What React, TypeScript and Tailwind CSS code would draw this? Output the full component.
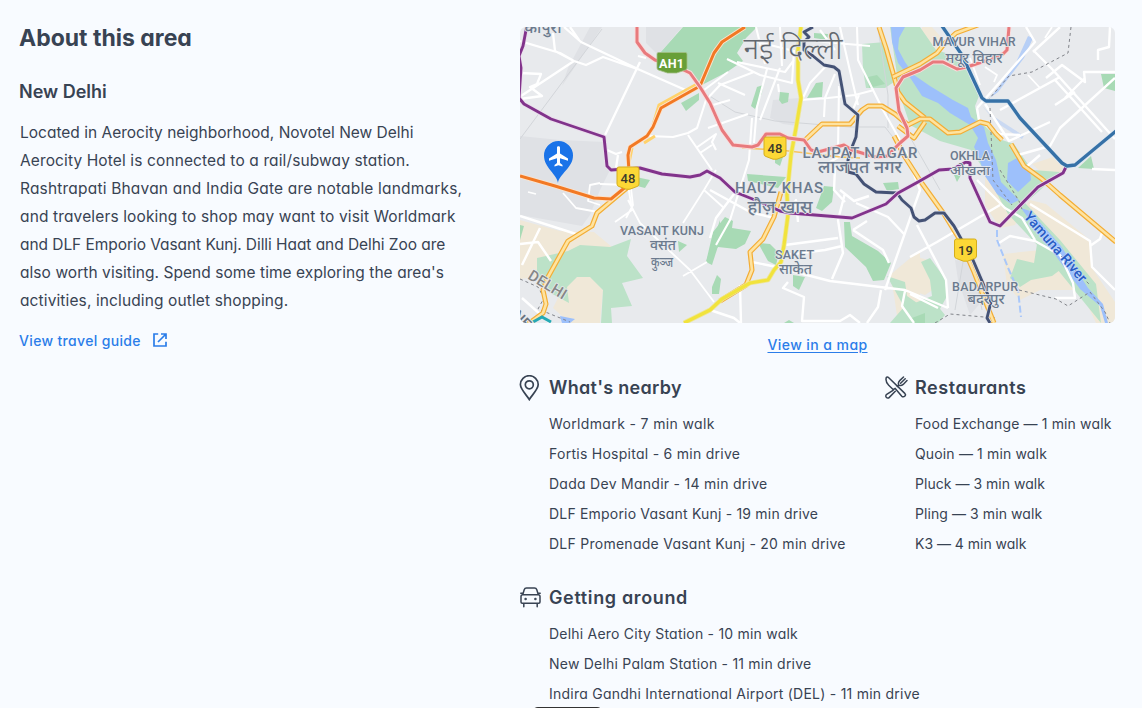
import type { ReactNode } from "react";

const nearby = [
  { t: "Worldmark - 7 min walk", c: "tracking-[0.36px]" },
  { t: "Fortis Hospital - 6 min drive", c: "tracking-[0.27px]" },
  { t: "Dada Dev Mandir - 14 min drive", c: "tracking-[0.27px]" },
  { t: "DLF Emporio Vasant Kunj - 19 min drive", c: "tracking-[0.19px]" },
  { t: "DLF Promenade Vasant Kunj - 20 min drive", c: "tracking-[0.26px]" },
];
const restaurants = [
  { t: "Food Exchange — 1 min walk", c: "tracking-[0.14px]" },
  { t: "Quoin — 1 min walk", c: "tracking-[0.15px]" },
  { t: "Pluck — 3 min walk", c: "tracking-[0.03px]" },
  { t: "Pling — 3 min walk", c: "tracking-[0.08px]" },
  { t: "K3 — 4 min walk", c: "tracking-[-0.02px]" },
];
const around = [
  { t: "Delhi Aero City Station - 10 min walk", c: "tracking-[0.22px]" },
  { t: "New Delhi Palam Station - 11 min drive", c: "tracking-[0.22px]" },
  { t: "Indira Gandhi International Airport (DEL) - 11 min drive", c: "tracking-[0.24px]" },
];
const about = [
  { t: "Located in Aerocity neighborhood, Novotel New Delhi", c: "tracking-[0px]" },
  { t: "Aerocity Hotel is connected to a rail/subway station.", c: "tracking-[0.12px]" },
  { t: "Rashtrapati Bhavan and India Gate are notable landmarks,", c: "tracking-[0.19px]" },
  { t: "and travelers looking to shop may want to visit Worldmark", c: "tracking-[0.14px]" },
  { t: "and DLF Emporio Vasant Kunj. Dilli Haat and Delhi Zoo are", c: "tracking-[-0.06px]" },
  { t: "also worth visiting. Spend some time exploring the area's", c: "tracking-[0.06px]" },
  { t: "activities, including outlet shopping.", c: "tracking-[0.12px]" },
];

function Section({ icon, title, items, tracking }: { icon: ReactNode; title: string; items: { t: string; c: string }[]; tracking: string }) {
  return (
    <section>
      <div className="flex h-7 items-center gap-2">
        <span className="flex w-[21px] shrink-0 justify-center">{icon}</span>
        <h3 className={`whitespace-nowrap text-[18px] font-semibold ${tracking}`}>{title}</h3>
      </div>
      <ul className="mt-2 pl-[29px] text-[14px] leading-[30px]">
        {items.map((i) => (
          <li key={i.t} className="whitespace-nowrap">
            <span className={i.c}>{i.t}</span>
          </li>
        ))}
      </ul>
    </section>
  );
}

function PinIcon() {
  return (
    <svg className="mr-[3px] mt-px h-[26px] w-[21px] shrink-0" viewBox="0 0 21 26" fill="none" stroke="currentColor" strokeWidth="1.7">
      <path d="M10.3 24.5C8 20.500 1.400 14.500 1.400 9.600a8.900 8.900 0 0 1 17.800 0c0 4.900-6.600 10.900-8.900 14.900Z" />
      <circle cx="10.300" cy="9.800" r="4" />
    </svg>
  );
}

function CutleryIcon() {
  return (
    <svg className="h-[23px] w-[23px] shrink-0" viewBox="0 0 23 23" fill="none" stroke="currentColor" strokeWidth="1.500" strokeLinecap="round" strokeLinejoin="round">
      <path d="M1.300 1.500c-.8 2.700.1 5.500 2.400 7.700l4.700 4.500 1.800-1.300 6.600 7.800a2 2 0 0 0 3-2.800L3.500 1.500c-.7-.7-1.700-.8-2.200 0Z" />
      <path d="m8 14.300-6.300 4.100a2 2 0 1 0 2.600 3l6-6.100M12.400 10.400l1.300-1.300c-.7-1.800-.2-3.300 1-4.500L18.500 1M22 4.500l-3.800 3.900c-1.200 1.100-2.700 1.500-4.300.9M20.200 2.700l-4.600 4.600" />
    </svg>
  );
}

function CarIcon() {
  return (
    <svg className="h-[21px] w-[21px] shrink-0" viewBox="0 0 21 21" fill="none" stroke="currentColor" strokeWidth="1.500" strokeLinecap="round" strokeLinejoin="round">
      <path d="m2.700 7.700 1.500-5C4.600 1.500 5.300 1 6.500 1h8c1.200 0 1.900.5 2.300 1.700l1.500 5M2.700 7.700h15.600c1 0 1.700.8 1.700 1.800V15c0 .8-.4 1.200-1.200 1.200H2.200C1.400 16.200 1 15.800 1 15V9.500c0-1 .7-1.800 1.700-1.800ZM3.800 16.200v3.600M17.200 16.200v3.600M.8 6.300h1.500M18.700 6.300h1.500" />
      <circle cx="5.600" cy="12" r=".5" fill="currentColor" />
      <circle cx="15.400" cy="12" r=".5" fill="currentColor" />
    </svg>
  );
}

function OpenIcon() {
  return (
    <svg className="h-[14px] w-[14px] shrink-0" viewBox="0 0 14 14" fill="none" stroke="currentColor" strokeWidth="1.700">
      <path d="M5.200 1H1v12h12V8.800M8 1h5v5M13 1 5 9" />
    </svg>
  );
}

function Road({ d, color, w, casing, cw }: { d: string; color: string; w: number; casing: string; cw: number }) {
  return (
    <g fill="none" strokeLinejoin="round">
      <path d={d} stroke={casing} strokeWidth={cw} />
      <path d={d} stroke={color} strokeWidth={w} />
    </g>
  );
}

function Shield({ x, y, n }: { x: number; y: number; n: string }) {
  return (
    <g>
      <path d={`M${x - 9} ${y - 11}h18q2 0 2 2v15q0 2-2 2.500l-7 2.700h-4l-7-2.700q-2-.5-2-2.500v-15q0-2 2-2Z`} fill="#fcd836" stroke="#d5ae1c" strokeWidth="1" />
      <text x={x} y={y + 4.800} textAnchor="middle" fontSize="13" fontWeight="500" fill="#3c3a2c">{n}</text>
    </g>
  );
}

function AreaMap() {
  const amber = [
    "M879 27 886 48 895 80 898 92 905 102 925 118",
    "M893 77 920 64 937 53 945 43 956 33 978 25",
    "M805 140 822 124 850 124 862 110 868 106 882 106 895 114 908 125 920 119 930 119 948 133 960 132 980 122 988 124 996 134 1002 140",
    "M1011 144 1024 166 1042 179 1060 195 1116 242",
    "M898 126 914 138 925 122",
    "M894 136 905 157 921 182 944 214 960 240 974 272 988 308 994 323",
    "M628 187 622 192 597 213 592 226 568 241 548 277 543 290 546 304 543 313 528 324",
    "M781 192 774 217 763 239 750 252 752 270 746 285 720 301",
  ];
  return (
    <svg className="block h-[296px] w-[595px] rounded-md" viewBox="520 27 595 296" fontFamily="Roboto, 'Noto Sans', sans-serif">
      <rect x="520" y="27" width="595" height="296" fill="#e8eaed" />
      <g fill="#dfe1e5">
        <path d="M520 136 560 140 605 142 610 170 600 190 590 215 582 226 520 215Z" />
        <path d="M646 27h36l-24 28-12-12Z" />
        <path d="M773 100 800 98 797 126 783 124 770 118Z" />
        <path d="M955 260 972 262 983 300 970 315 958 280Z" />
        <path d="M562 86 602 27 590 27 568 68Z" />
      </g>
      <g fill="#f0e8d8">
        <path d="M520 220 560 231 594 232 612 247 600 256 540 260 536 277 520 279Z" />
        <path d="M563 288 578 276 592 277 603 290 600 323 570 323 553 308Z" />
        <path d="M1030 200 1046 204 1090 240 1092 268 1115 302 1115 323 1096 323 1085 300 1060 250 1020 212Z" />
        <path d="M985 175 1008 205 1022 210 1015 225 1000 228 985 205Z" />
        <path d="M1003 254 1040 250 1062 258 1075 290 1040 290 1020 300 1007 285Z" />
        <path d="M910 255 928 260 940 285 925 295 910 290Z" />
        <path d="M890 275 920 250 920 310 898 323 894 295Z" />
        <path d="M922 27 932 27 948 45 935 52 922 42Z" />
        <path d="M1032 164 1056 156 1066 170 1048 178Z" />
      </g>
      <g fill="#bce2c8">
        <path d="M890 27H920L936 50 962 58 979 96 975 106 978 120 999 139 1014 144 1032 170 1060 172 1038 192 1025 203 1060 240 1096 284 1101 323 1092 312 1040 248 1008 214 984 170 971 150 940 141 910 125 900 95Z" />
        <path d="M862 44 885 42 894 82 885 88 866 88 863 70Z" />
        <path d="M568 251 580 245 610 247 631 239 627 256 643 278 622 283 632 306 611 308 612 323H601L603 290 590 277 577 277 567 287 569 303 545 290 537 277 537 258Z" />
        <path d="M1017 259 1034 263 1037 244 1053 247 1068 264 1052 276 1031 280 1020 287 1010 278Z" />
        <path d="M887 276 905 282 907 296 920 305 933 300 945 315 938 323H890L904 307Z" />
        <path d="M921 262 930 258 946 280 946 298 936 316 912 320 910 305 932 296 930 280Z" />
      </g>
      <g fill="#a8dab5">
        <path d="M660 53 683 27H757L746 38 737 53 743 61 727 72 700 86 688 72Z" />
        <path d="M520 225 524 226 520 240Z" />
        <path d="M681 103 699 93 699 100 686 111Z" />
        <path d="M751 106 757 87 763 85 762 93 755 109Z" />
        <path d="M780 92 789 93 788 102 782 104 779 100Z" />
        <path d="M807 98 816 83 823 82 822 97Z" />
        <path d="M868 77 877 75 885 84 869 88Z" />
        <path d="M814 33 828 34 827 40 814 38Z" />
        <path d="M775 157H783L780 166 775 163Z" />
        <path d="M747 174 786 177 778 188 748 181Z" />
        <path d="M816 208 824 186 834 187 832 202 822 211Z" />
        <path d="M883 183 898 182 899 189 887 191Z" />
        <path d="M713 232 725 217 733 221 732 228 751 231 745 244 736 249 718 247 706 262Z" />
        <path d="M758 243 770 244 779 253 776 265 768 261Z" />
        <path d="M712 287 717 275 721 279 719 294 712 294Z" />
        <path d="M706 262 720 220 720 240 712 265Z" />
        <path d="M844 222 850 222 852 236 878 251 891 263 884 280 873 281 866 267 845 247Z" />
        <path d="M793 275 805 277 799 290 793 286Z" />
        <path d="M784 323 789 320 794 323Z" />
        <path d="M1101 74H1115V91L1104 88Z" />
        <path d="M1078 168 1091 156 1094 169Z" />
        <path d="M678 241 687 245 679 252Z" />
        <path d="M636 177 650 180 645 188 637 186Z" />
        <path d="M954 175H961L957 182Z" />
        <path d="M912 318 925 313 925 323H912Z" />
      </g>
      <g fill="#9dc0fb">
        <path d="M891 27H905L899 38 898 49 905 62 914 75 930 86 953 100 968 108 971 117 984 127 988 143 996 160 1001 182 1019 200 1011 204 997 194 985 176 978 155 974 147 978 138 970 125 950 113 938 103 922 96 911 79 898 63 892 42Z" />
        <path d="M1008 163 1017 158 1030 168 1031 180 1018 192 1007 181Z" />
        <path d="M1021 208 1030 211 1061 246 1088 288 1103 304 1108 323H1105L1100 306 1080 289 1050 248Z" />
        <path d="M1028 36 1033 38 1024 58 998 92 990 98 1014 67Z" opacity=".65" />
        <path d="M982 106 990 114 1024 136 1022 139 997 123Z" opacity=".4" />
        <path d="M560 316 575 319 570 323H562Z" />
      </g>
      <g fill="none" stroke="#d2d5d9" strokeWidth="1">
        <path d="M520 139 602 29M708 95 735 112 775 121 850 127 885 127 899 145M878 27 888 95 888 128M910 137 940 190M965 250 955 310M973 263 982 310" />
      </g>
      <g fill="none" stroke="#fff" strokeWidth="1.800" strokeLinejoin="round">
        <path strokeWidth="2.300" d="M520 41 560 53 574 61 586 65 603 57 640 70 690 92M564 27 581 42 640 70M570 27 579 40M553 33 555 51 574 61 521 96M520 73 541 74 537 84 530 87 542 96 520 99M640 62 605 135M638 56 646 58M607 150 616 154 622 152M618 155 616 168" />
        <path strokeWidth="2.100" d="M728 72 704 90M648 136 673 137 688 133 697 128 706 100 720 85 754 72M688 135 712 170M696 148 716 134 712 142 716 150M700 153 712 145M713 105 730 100M708 128 748 114M752 118 749 160 730 220 716 245M767 69 757 107 754 143M780 68 760 120M727 59 760 75 792 83 794 50M737 62 785 72 794 60M718 83 745 95M778 84 779 92M800 100 828 98 855 95 874 90M828 64 810 83 802 100M835 74 825 98 824 117M839 86 838 150M780 27 782 66M750 40 790 50M756 27 765 64M840 27 850 71 858 105M857 27 858 60 883 110 900 140M802 40 870 46M820 30 835 50M859 95 852 112" />
        <path d="M536 194 528 192M563 193 576 208 598 212M600 183 590 185 588 201 600 205M600 184 628 185 632 210 615 222M628 200 640 223 690 270 714 302M683 223 704 190 724 208M704 190 716 170M683 276 707 262M626 218 633 205 630 180" />
        <path strokeWidth="2.400" d="M520 216 576 234M540 228 522 265M520 244 538 242 551 261M522 298 550 323M710 190 750 212 774 218M710 238 716 218 737 190M752 262 772 266 830 281 905 290 948 308M787 215 796 200 798 222M785 255 825 250 842 246M785 245 838 238M820 168 850 150M845 193 838 220 843 253 832 279M840 190 854 201 869 196M856 203 888 217 904 234M853 230 867 221M853 230 883 250 889 263M835 168 834 190 845 202M885 290 920 190 905 150M788 282 783 288 804 297 802 321 840 321 850 315 860 323M881 290 878 307 867 323M905 291 902 306 914 323M740 285 741 323M710 310 734 318 740 323M910 257 937 242 1000 205M910 294 938 308M917 225 946 280 948 308M977 180 1005 208 1022 218 1035 240M999 243 1010 236 1035 241 1060 255 1073 283 1075 298 1055 298M1018 155 1050 146 1060 128 1115 78" />
        <path strokeWidth="2.400" d="M977 108 1000 82 1035 42 1026 27M977 108 979 120 1000 134 1020 135M985 104 1009 141 1050 122M1033 50 1052 69 1115 139M1033 52 1060 27M1046 78 1062 65 1085 82 1084 72 1115 72M1065 98 1085 78M1000 110 1060 77M1055 80 1102 132M1075 92 1055 105M1110 27 1109 47 1098 50 1098 60M1025 168 1040 155M1092 169 1115 170M1030 204 1090 241 1092 267 1115 290M1090 246 1100 239 1103 230" />
        <path d="M1028 75 1040 88M970 58 980 85M985 67 997 75 994 82M1052 27 1045 38" />
      </g>
      <g fill="none" stroke="#808389" strokeWidth="1" strokeDasharray="3 3">
        <path d="M1071 27 1068 53 1032 72 1009 76 989 99M990 108 993 180 1012 205M1000 170 1019 201 1023 212M520 279 538 287 544 298 538 309 570 322M1019 290 1056 299 1068 306 1090 292 1105 312 1110 323M935 323 950 314 995 318M1040 235 1090 285" />
      </g>
      <path d="M997 230 997 240 1009 270 1018 290 1021 317" fill="none" stroke="#a8c7fa" strokeWidth="2" strokeDasharray="7 3" />
      <path d="M742 148 780 150 840 157 860 158" fill="none" stroke="#f7c35f" strokeWidth="1.500" />
      <path d="M697 84 659 105 653 125M655 136 644 143M632 148 628 168" fill="none" stroke="#ffd26a" strokeWidth="3" />
      {amber.map((d) => (
        <Road key={d} d={d} color="#fee3a0" w={2.600} casing="#f3ad35" cw={5} />
      ))}
      <Road d="M801 27 798 50 798 80 801 98 796 128 791 155 787 195 788 215 784 245 781 262 774 270 768 280 750 283 722 299 710 310 684 323" color="#f1e33c" w={3.200} casing="#eee69a" cw={4.800} />
      <Road d="M745 27 722 42 714 53 700 86 661 108 653 127 647 136 630 147 628 155 629 172M520 176 555 186 594 198 611 199 628 185" color="#f27924" w={3} casing="#fbe3cd" cw={4.800} />
      <Road d="M813 27 804 32 809 37 804 42 804 50 813 56 824 65 834 67 839 71 845 104 858 115 856 137 852 147 848 160 848 172 856 174 864 184 876 192 897 193 902 200 911 208 914 217 919 221 925 220 935 213 944 213 954 226 973 260 991 302 987 318 990 323" color="#445275" w={2.900} casing="#e0e3ea" cw={4.500} />
      <Road d="M637 27V42L645 53 655 60 675 66 690 73 700 87 710 103 722 130 733 145 752 147 758 145 766 134 780 134 788 138 804 140 811 150 818 152 844 145 852 150 875 157 887 156 900 143 908 136 907 128 899 111 896 88 903 77 920 70 933 62 943 62 957 69 967 67 985 61 1003 54 1007 50 1009 27" color="#e87a7d" w={3} casing="#f9dcdc" cw={4.800} />
      <Road d="M527 25 523 46 519 56 521 68 519 98 524 104 551 119 604 137 607 166 611 170 640 168 662 174 690 177 700 175 707 171 720 178 735 192 760 202 780 211 790 213 852 218 886 204 898 193 918 182 939 170 953 169 966 162 970 163 970 178 990 222 1000 226 1038 187 1063 173 1066 167" color="#81338b" w={2.900} casing="#eadcec" cw={4.500} />
      <Road d="M942 26 962 55 982 98 986 101H1008L1020 118 1062 163 1067 166 1075 165 1116 131" color="#3671a7" w={3.300} casing="#dce7f0" cw={4.800} />
      <path d="m533 322 9-5 9 5" fill="none" stroke="#25a9b5" strokeWidth="3" />
      <g fill="#6b7a8e" stroke="#e8eaed" strokeWidth="1.600" paintOrder="stroke" strokeLinejoin="round" textAnchor="middle" fontWeight="500">
        <text x="543" y="33" fontSize="16">कापुरा</text>
        <text x="793" y="59" fontSize="30" fontWeight="300" fontFamily="'Noto Sans', sans-serif" fill="#62686f" textLength="99" lengthAdjust="spacingAndGlyphs">नई दिल्ली</text>
        <g fontSize="12.500">
          <text x="974" y="46" textLength="83">MAYUR VIHAR</text>
          <text x="974" y="63" fontSize="14" textLength="57" lengthAdjust="spacingAndGlyphs">मयूर विहार</text>
          <text x="970" y="160" textLength="40">OKHLA</text>
          <text x="970" y="175" fontSize="13" textLength="40" lengthAdjust="spacingAndGlyphs">ओखला</text>
          <text x="662" y="235" textLength="84">VASANT KUNJ</text>
          <text x="663" y="250" fontSize="14" textLength="26" lengthAdjust="spacingAndGlyphs">वसंत</text>
          <text x="662" y="267" fontSize="14" textLength="22" lengthAdjust="spacingAndGlyphs">कुञ्ज</text>
          <text x="794.500" y="259" textLength="39">SAKET</text>
          <text x="795.500" y="274" fontSize="14" textLength="33" lengthAdjust="spacingAndGlyphs">साकेत</text>
          <text x="985" y="291" textLength="66">BADARPUR</text>
          <text x="986" y="304" fontSize="14" textLength="37" lengthAdjust="spacingAndGlyphs">बदरपुर</text>
        </g>
        <text x="860" y="157.500" fontSize="15" textLength="115">LAJPAT NAGAR</text>
        <text x="860" y="173" fontSize="17" textLength="84" lengthAdjust="spacingAndGlyphs">लाजपत नगर</text>
        <text x="779" y="193" fontSize="15" textLength="88">HAUZ KHAS</text>
        <text x="780" y="213" fontSize="18" textLength="65" lengthAdjust="spacingAndGlyphs">हौज़ खास</text>
        <text transform="translate(545 289) rotate(31)" fontSize="15" fill="#868686" textLength="42">DELHI</text>
        <text transform="translate(523 328) rotate(45)" fontSize="15" fill="#68727e">NEW</text>
        <text transform="translate(1052 250) rotate(49)" fontSize="14" fill="#285cc4" stroke="#bbd4fb" textLength="88">Yamuna River</text>
      </g>
      <path d="M657 54q0-1.500 1.500-1.500h27q1.500 0 1.500 1.500v14q0 1.500-1.500 2l-9 3h-9l-9-3q-1.500-.5-1.500-2Z" fill="#689f38" stroke="#a2be85" strokeWidth=".8" />
      <text x="671.500" y="68" textAnchor="middle" fontSize="12.500" fontWeight="700" fill="#fff" textLength="25">AH1</text>
      <Shield x={628} y={178} n="48" />
      <Shield x={775} y={148} n="48" />
      <Shield x={965.500} y={250} n="19" />
      <path d="M558 183c-1-9-14-15-14-27.500a14.500 14.500 0 0 1 29 0c0 12.500-14 18.500-15 27.500Z" fill="#1a73e8" />
      <path d="M557 147.500c0-1.800 3-1.800 3 0v6l8 5v2.300l-8-2.600v4.800l2.500 2v1.500l-4-1.200-4 1.200V165l2.500-2v-4.800l-8 2.600v-2.300l8-5Z" fill="#fff" />
    </svg>
  );
}

export default function App() {
  return (
    <div className="flex h-[708px] w-[1142px] overflow-hidden bg-[#f8fbff] pl-[19px] font-['Inter','Open_Sans',sans-serif] text-[#384353] [font-feature-settings:'cv11']">
      <section className="w-[501px] shrink-0 pt-[22px]">
        <h1 className="text-[23px] font-bold leading-8">About this area</h1>
        <h2 className="mt-6 text-[18px] font-semibold leading-7">New Delhi</h2>
        <p className="mt-[13px] pl-px text-[15.5px] leading-7">
          {about.map((l) => (
            <span key={l.t} className="block whitespace-nowrap">
              <span className={l.c}>{l.t}</span>
            </span>
          ))}
        </p>
        <a className="mt-[11px] flex h-7 items-center gap-3 text-[14px] font-medium text-[#2b7de9]">
          <span className="tracking-[0.34px]">View travel guide</span>
          <OpenIcon />
        </a>
      </section>
      <section className="w-[595px] shrink-0 pt-[27px]">
        <AreaMap />
        <div className="flex h-[50px] items-center justify-center pb-2 text-[14px] font-medium text-[#2b7de9]">
          <a className="tracking-[0.42px] underline underline-offset-2">View in a map</a>
        </div>
        <div className="grid grid-cols-[366px_229px] gap-y-6">
          <Section icon={<PinIcon />} title="What's nearby" items={nearby} tracking="tracking-[0.3px]" />
          <Section icon={<CutleryIcon />} title="Restaurants" items={restaurants} tracking="tracking-[0.54px]" />
          <Section icon={<CarIcon />} title="Getting around" items={around} tracking="tracking-[0.64px]" />
        </div>
        <div className="-mt-0.5 ml-3 h-4 w-[71px] rounded-md bg-[#333]" />
      </section>
    </div>
  );
}
